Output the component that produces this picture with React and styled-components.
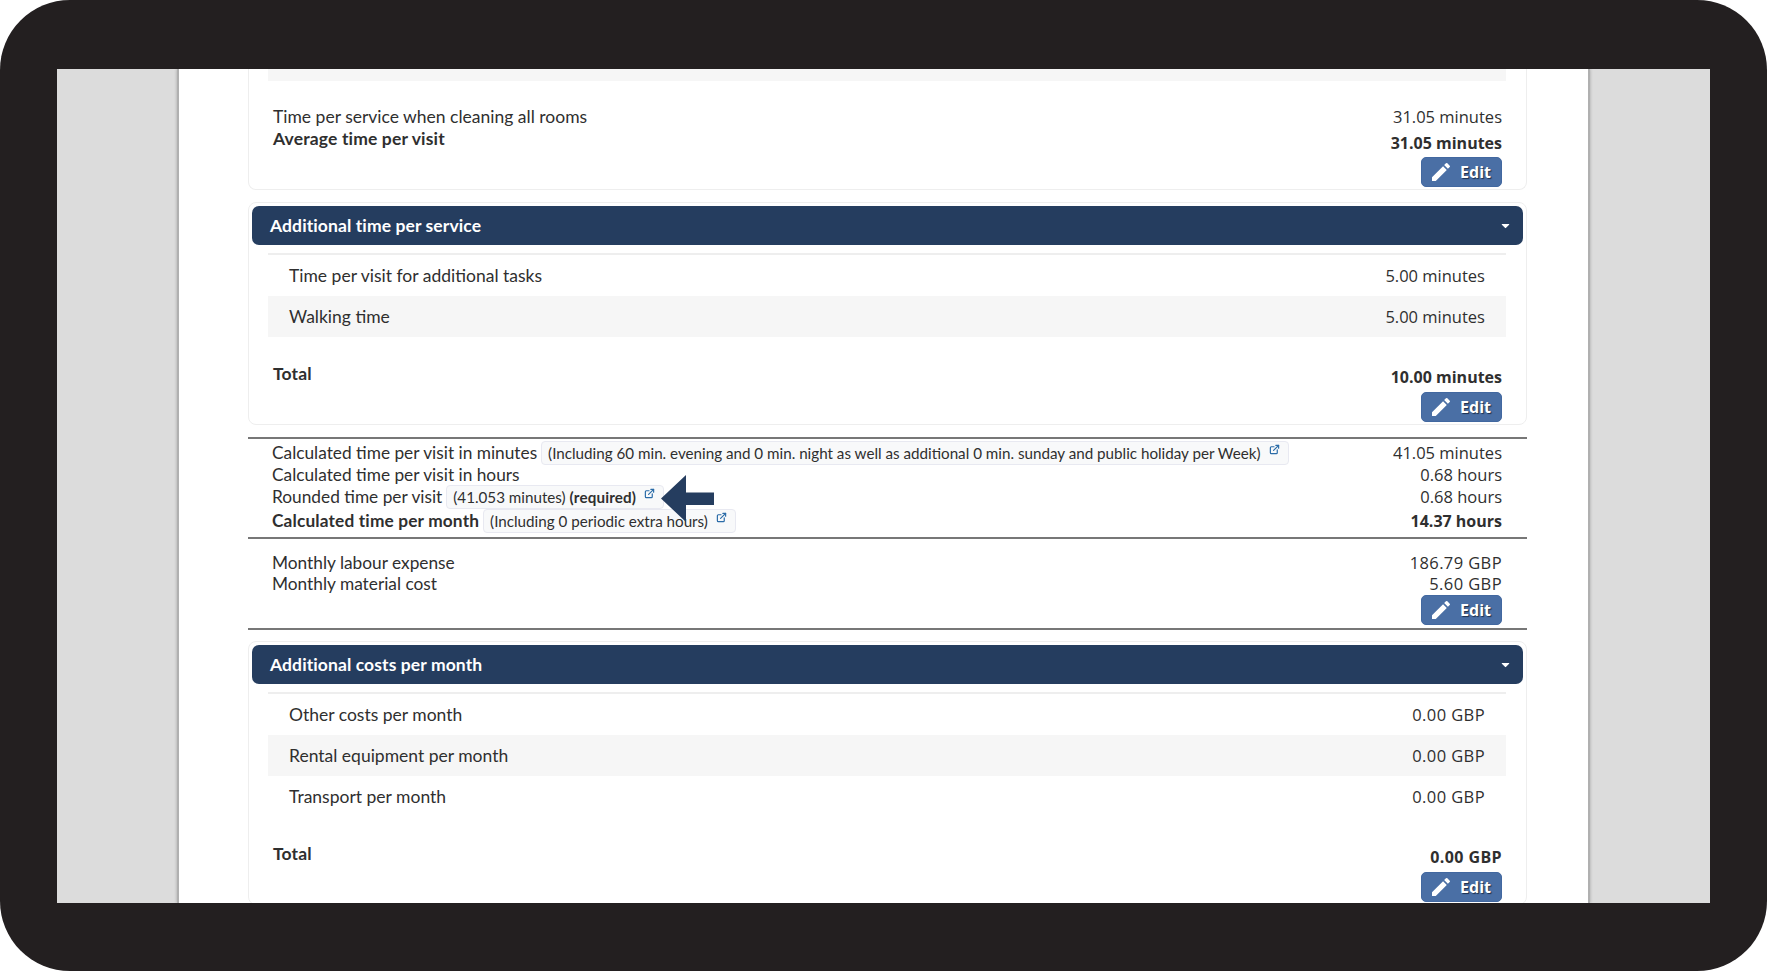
import React from 'react';
import styled, { createGlobalStyle } from 'styled-components';
import { FaCaretDown } from 'react-icons/fa';
import { MdEdit } from 'react-icons/md';
import { ExternalLink } from 'lucide-react';

const GlobalStyle = createGlobalStyle`
  html, body {
    margin: 0;
    padding: 0;
    background: #fff;
  }
  * {
    box-sizing: border-box;
  }
`;

const Frame = styled.div`
  width: 1767px;
  height: 971px;
  padding: 69px 57px 68px;
  background: #231f20;
  border-radius: 70px;
  overflow: hidden;
`;

const Viewport = styled.div`
  height: 834px;
  background: #dcdcdc;
  overflow: hidden;
`;

const Page = styled.div`
  width: 1413px;
  height: 100%;
  margin: 0 auto;
  padding: 0 61px 0 69px;
  background: #fff;
  border-left: 2px solid #b0b0b0;
  border-right: 2px solid #b0b0b0;
  box-shadow: 0 0 3px rgba(0, 0, 0, 0.25);
  font-family: 'Lato', sans-serif;
  font-size: 17.5px;
  color: #2f2f2f;
`;

const Card = styled.section`
  margin-bottom: 12px;
  padding: ${p => (p.$clipped ? '0 3px 2px' : '3px 3px 2px')};
  border: 1px solid #eeeeee;
  border-top: ${p => (p.$clipped ? 'none' : '1px solid #eeeeee')};
  border-radius: ${p => (p.$clipped ? '0 0 8px 8px' : '8px')};
`;

const Header = styled.header`
  display: flex;
  align-items: center;
  justify-content: space-between;
  height: 39px;
  padding: 0 11px 0 18px;
  background: #253d5f;
  border-radius: 7px;
  color: #fff;
  font-size: 17.5px;
  font-weight: 700;
  letter-spacing: 0.1px;
`;

const TableTop = styled.div`
  margin: 8px 17px 0 16px;
  border-top: 2px solid #eeeeee;
`;

const Stripe = styled.div`
  height: 12px;
  margin: 0 17px 0 16px;
  background: #f6f6f6;
`;

const RowList = styled.div`
  margin: 0 17px 0 16px;
`;

const Row = styled.div`
  display: flex;
  align-items: center;
  justify-content: space-between;
  height: 41px;
  padding: 0 21px;
  background: ${p => (p.$shaded ? '#f6f6f6' : 'transparent')};
`;

const Value = styled.span`
  font-family: 'Open Sans', sans-serif;
  font-size: ${p => (p.$bold ? 16 : 16.5)}px;
  font-weight: ${p => (p.$bold ? 700 : 400)};
  line-height: 22px;
  letter-spacing: ${p => (p.$money ? 0.4 : 0)}px;
`;

const Summary = styled.div`
  display: flex;
  justify-content: space-between;
  padding: ${p => p.$top}px 21px 0 21px;
`;

const Labels = styled.div`
  display: flex;
  flex-direction: column;
  line-height: 21.5px;
`;

const BoldLabel = styled.span`
  font-weight: 700;
  letter-spacing: 0.15px;
`;

const Totals = styled.div`
  display: flex;
  flex-direction: column;
  align-items: flex-end;
`;

const TotalValue = styled(Value)`
  margin-top: ${p => p.$top}px;
  margin-bottom: ${p => p.$after}px;
`;

const EditButton = styled.button`
  display: flex;
  align-items: center;
  justify-content: space-between;
  width: 81px;
  height: 30px;
  padding: 0 10px 0 7px;
  background: #4a6fa5;
  border: 1px solid #4268a0;
  border-radius: 5px;
  color: #fff;
  font-family: 'Open Sans', sans-serif;
  font-size: 16px;
  font-weight: 700;
  text-shadow: 1px 1px 1px #1d2f4c;
`;

const Rule = styled.hr`
  height: 2px;
  margin: 0 0 ${p => p.$after || 0}px;
  border: none;
  background: #777;
`;

const CalcBlock = styled.div`
  padding: ${p => p.$top}px 25px ${p => p.$bottom}px 24px;
  font-size: 17.3px;
`;

const CalcRow = styled.div`
  display: flex;
  align-items: center;
  justify-content: space-between;
  height: ${p => p.$height || 22}px;
  line-height: 22px;
`;

const CalcLabel = styled.div`
  display: flex;
  align-items: center;
  gap: 4px;
  font-weight: ${p => (p.$bold ? 700 : 400)};
  letter-spacing: ${p => (p.$bold ? 0.15 : 0)}px;
`;

const Pill = styled.span`
  position: relative;
  display: inline-flex;
  height: 23.5px;
  align-items: center;
  padding: 0 6px;
  background: #f8f9fa;
  border: 1px solid #e8e9f1;
  border-radius: 4px;
  font-size: 15.2px;
  font-weight: 400;
  letter-spacing: 0;
`;

const PillIcon = styled(ExternalLink)`
  margin: -7px 2px 0 8px;
  color: #2b6ca8;
`;

const Arrow = styled.svg`
  position: absolute;
  top: -11px;
  left: 100%;
  margin-left: -3px;
  z-index: 2;
`;

const Actions = styled.div`
  display: flex;
  justify-content: flex-end;
`;

const PillLink = () => <PillIcon size={11} strokeWidth={2.6} />;

const Edit = () => (
  <EditButton>
    <MdEdit size={24} />
    Edit
  </EditButton>
);

const Section = ({ title, rows, total, money }) => (
  <Card>
    <Header>
      {title}
      <FaCaretDown size={13} />
    </Header>
    <TableTop />
    <RowList>
      {rows.map(([label, value], i) => (
        <Row key={label} $shaded={i % 2 === 1}>
          <span>{label}</span>
          <Value $money={money}>{value}</Value>
        </Row>
      ))}
    </RowList>
    <Summary $top={26}>
      <Labels>
        <BoldLabel>Total</BoldLabel>
      </Labels>
      <Totals>
        <TotalValue $bold $money={money} $top={3} $after={4}>{total}</TotalValue>
        <Edit />
      </Totals>
    </Summary>
  </Card>
);

export default function App() {
  return (
    <>
      <GlobalStyle />
      <Frame>
        <Viewport>
          <Page>
            <Card $clipped>
              <Stripe />
              <Summary $top={25}>
                <Labels>
                  <span>Time per service when cleaning all rooms</span>
                  <BoldLabel>Average time per visit</BoldLabel>
                </Labels>
                <Totals>
                  <Value>31.05 minutes</Value>
                  <TotalValue $bold $top={4} $after={3}>31.05 minutes</TotalValue>
                  <Edit />
                </Totals>
              </Summary>
            </Card>

            <Section
              title="Additional time per service"
              rows={[
                ['Time per visit for additional tasks', '5.00 minutes'],
                ['Walking time', '5.00 minutes'],
              ]}
              total="10.00 minutes"
            />

            <Rule />
            <CalcBlock $top={3} $bottom={3}>
              <CalcRow>
                <CalcLabel>
                  Calculated time per visit in minutes
                  <Pill>
                    (Including 60 min. evening and 0 min. night as well as additional 0 min. sunday and public holiday per Week)
                    <PillLink />
                  </Pill>
                </CalcLabel>
                <Value>41.05 minutes</Value>
              </CalcRow>
              <CalcRow>
                <CalcLabel>Calculated time per visit in hours</CalcLabel>
                <Value>0.68 hours</Value>
              </CalcRow>
              <CalcRow>
                <CalcLabel>
                  Rounded time per visit
                  <Pill>
                    <span>(41.053 minutes) <BoldLabel>(required)</BoldLabel></span>
                    <PillLink />
                    <Arrow width="56" height="47" viewBox="0 0 56 47">
                      <path d="M1 23.5 L26 0 V17.5 H54 V30 H26 V47 Z" fill="#253d5f" />
                    </Arrow>
                  </Pill>
                </CalcLabel>
                <Value>0.68 hours</Value>
              </CalcRow>
              <CalcRow $height={26}>
                <CalcLabel $bold>
                  Calculated time per month
                  <Pill>
                    (Including 0 periodic extra hours)
                    <PillLink />
                  </Pill>
                </CalcLabel>
                <Value $bold>14.37 hours</Value>
              </CalcRow>
            </CalcBlock>
            <Rule />
            <CalcBlock $top={13} $bottom={3}>
              <CalcRow $height={21.5}>
                <CalcLabel>Monthly labour expense</CalcLabel>
                <Value $money>186.79 GBP</Value>
              </CalcRow>
              <CalcRow $height={21.5}>
                <CalcLabel>Monthly material cost</CalcLabel>
                <Value $money>5.60 GBP</Value>
              </CalcRow>
              <Actions>
                <Edit />
              </Actions>
            </CalcBlock>
            <Rule $after={11} />

            <Section
              title="Additional costs per month"
              rows={[
                ['Other costs per month', '0.00 GBP'],
                ['Rental equipment per month', '0.00 GBP'],
                ['Transport per month', '0.00 GBP'],
              ]}
              total="0.00 GBP"
              money
            />
          </Page>
        </Viewport>
      </Frame>
    </>
  );
}
